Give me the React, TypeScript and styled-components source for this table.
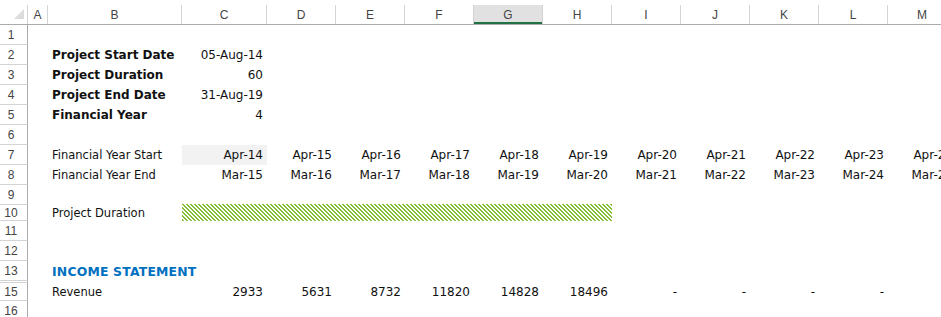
import styled, { createGlobalStyle } from 'styled-components';

const GlobalStyle = createGlobalStyle`
  html, body {
    margin: 0;
    padding: 0;
    background: #fff;
  }
  body {
    overflow: hidden;
  }
`;

const COLS = '28px 20px 134px 85px repeat(10, 69px)';
const LETTERS = ['A', 'B', 'C', 'D', 'E', 'F', 'G', 'H', 'I', 'J', 'K', 'L', 'M'];
const YEARS = [14, 15, 16, 17, 18, 19, 20, 21, 22, 23, 24];
const REVENUE = ['2933', '5631', '8732', '11820', '14828', '18496', '-', '-', '-', '-', '-'];

const HATCH =
  "url(\"data:image/svg+xml,%3Csvg xmlns='http://www.w3.org/2000/svg' width='4' height='4' shape-rendering='crispEdges'%3E%3Cpath d='M0 0h2v1H0zM1 1h2v1H1zM2 2h2v1H2zM3 3h1v1H3zM0 3h1v1H0z' fill='%2384bf36'/%3E%3C/svg%3E\")";

const App = () => {
  return (
    <Sheet>
      <GlobalStyle />
      <HeaderRow>
        <Corner>
          <svg width="10" height="10" viewBox="0 0 10 10">
            <polygon points="10,0 10,10 0,10" fill="#dcdcdc" />
          </svg>
        </Corner>
        {LETTERS.map((l) => (
          <ColHead key={l} $active={l === 'G'}>
            {l}
          </ColHead>
        ))}
      </HeaderRow>

      <Row $h={20}>
        <RowNum>1</RowNum>
      </Row>
      <Row $h={20}>
        <RowNum>2</RowNum>
        <Cell />
        <Label $bold>Project Start Date</Label>
        <Cell $right>05-Aug-14</Cell>
      </Row>
      <Row $h={20}>
        <RowNum>3</RowNum>
        <Cell />
        <Label $bold>Project Duration</Label>
        <Cell $right>60</Cell>
      </Row>
      <Row $h={20}>
        <RowNum>4</RowNum>
        <Cell />
        <Label $bold>Project End Date</Label>
        <Cell $right>31-Aug-19</Cell>
      </Row>
      <Row $h={20}>
        <RowNum>5</RowNum>
        <Cell />
        <Label $bold>Financial Year</Label>
        <Cell $right>4</Cell>
      </Row>
      <Row $h={20}>
        <RowNum>6</RowNum>
      </Row>
      <Row $h={20}>
        <RowNum>7</RowNum>
        <Cell />
        <Label>Financial Year Start</Label>
        {YEARS.map((y, i) => (
          <Cell key={y} $right $fill={i === 0 ? '#f2f2f2' : undefined}>
            Apr-{y}
          </Cell>
        ))}
      </Row>
      <Row $h={20}>
        <RowNum>8</RowNum>
        <Cell />
        <Label>Financial Year End</Label>
        {YEARS.map((y) => (
          <Cell key={y} $right>
            Mar-{y + 1}
          </Cell>
        ))}
      </Row>
      <Row $h={20}>
        <RowNum>9</RowNum>
      </Row>
      <Row $h={16}>
        <RowNum>10</RowNum>
        <Cell />
        <Label>Project Duration</Label>
        <DurationBar $span={6} />
      </Row>
      <Row $h={20}>
        <RowNum>11</RowNum>
      </Row>
      <Row $h={20}>
        <RowNum>12</RowNum>
      </Row>
      <Row $h={20}>
        <RowNum>13</RowNum>
        <Cell />
        <Label $bold $heading>
          INCOME STATEMENT
        </Label>
      </Row>
      <Row $h={2}>
        <RowNum />
      </Row>
      <Row $h={18}>
        <RowNum>15</RowNum>
        <Cell />
        <Label>Revenue</Label>
        {REVENUE.map((v, i) => (
          <Cell key={i} $right>
            {v}
          </Cell>
        ))}
      </Row>
      <Row $h={20}>
        <RowNum>16</RowNum>
      </Row>
    </Sheet>
  );
};

export default App;

const Sheet = styled.div`
  width: 941px;
  height: 317px;
  overflow: hidden;
  background: #fff;
  font-family: 'DejaVu Sans', Verdana, sans-serif;
  color: #111;
`;

const HeaderRow = styled.div`
  display: grid;
  grid-template-columns: ${COLS};
  height: 25px;
  padding-top: 5px;
  box-sizing: border-box;
  border-bottom: 1px solid #ababab;
`;

const Corner = styled.div`
  display: flex;
  align-items: flex-end;
  justify-content: flex-end;
  padding: 0 3px 5px 0;
  border-right: 1px solid #d4d4d4;
  box-sizing: border-box;
`;

const ColHead = styled.div<{ $active?: boolean }>`
  display: flex;
  align-items: center;
  justify-content: center;
  box-sizing: border-box;
  border-right: 1px solid #d4d4d4;
  font-family: 'Liberation Sans', Arial, sans-serif;
  font-size: 12px;
  color: #444;
  background: ${(p) => (p.$active ? '#e1e1e1' : '#fff')};
  box-shadow: ${(p) => (p.$active ? 'inset 0 -2px 0 #217346' : 'none')};
`;

const Row = styled.div<{ $h: number }>`
  display: grid;
  grid-template-columns: ${COLS};
  height: ${(p) => p.$h}px;
`;

const RowNum = styled.div`
  display: flex;
  align-items: center;
  justify-content: center;
  padding-right: 5px;
  box-sizing: border-box;
  border-right: 1px solid #ababab;
  border-bottom: 1px solid #d4d4d4;
  font-family: 'Liberation Sans', Arial, sans-serif;
  font-size: 12px;
  color: #444;
`;

const Cell = styled.div<{ $right?: boolean; $fill?: string }>`
  display: flex;
  align-items: center;
  justify-content: ${(p) => (p.$right ? 'flex-end' : 'flex-start')};
  padding: 0 4px;
  white-space: nowrap;
  font-size: 12px;
  background: ${(p) => p.$fill ?? 'transparent'};
`;

const Label = styled.div<{ $bold?: boolean; $heading?: boolean }>`
  display: flex;
  align-items: center;
  padding: 0 4px;
  white-space: nowrap;
  font-size: ${(p) => (p.$heading ? '12.4px' : p.$bold ? '12px' : '11.5px')};
  font-weight: ${(p) => (p.$bold ? 700 : 400)};
  letter-spacing: ${(p) => (p.$heading ? '0.2px' : 'normal')};
  color: ${(p) => (p.$heading ? '#0070c0' : '#111')};
`;

const DurationBar = styled.div<{ $span: number }>`
  grid-column: span ${(p) => p.$span};
  margin-top: -1px;
  background-image: ${HATCH};
  background-repeat: repeat;
`;
